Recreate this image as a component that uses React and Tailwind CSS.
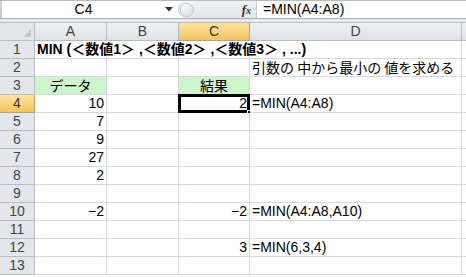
import React from "react";

const font = { fontFamily: '"Liberation Sans", "Noto Sans CJK JP", sans-serif' };
const jp = { fontFamily: '"Noto Sans CJK JP", sans-serif' };

const cols = [
  { key: "A", w: "w-[72px]" },
  { key: "B", w: "w-[72px]" },
  { key: "C", w: "w-[71px]" },
  { key: "D", w: "w-[212px]" },
];

const rows = [
  { n: 2, D: { t: "引数の 中から最小の 値を求める", jp: true } },
  { n: 3, A: { t: "データ", green: true, center: true, jp: true }, C: { t: "結果", green: true, center: true, jp: true } },
  { n: 4, A: { t: "10", right: true }, C: { t: "2", right: true, sel: true }, D: { t: "=MIN(A4:A8)" } },
  { n: 5, A: { t: "7", right: true } },
  { n: 6, A: { t: "9", right: true } },
  { n: 7, A: { t: "27", right: true } },
  { n: 8, A: { t: "2", right: true } },
  { n: 9 },
  { n: 10, A: { t: "−2", right: true }, C: { t: "−2", right: true }, D: { t: "=MIN(A4:A8,A10)" } },
  { n: 11 },
  { n: 12, C: { t: "3", right: true }, D: { t: "=MIN(6,3,4)" } },
  { n: 13 },
];

function RowHead({ n, active }) {
  return (
    <div
      className={`w-[35px] shrink-0 h-full flex items-center justify-center border-r border-b text-[14px] ${
        active
          ? "bg-gradient-to-b from-[#fbe3a4] to-[#f2c55c] border-[#c5a25a] text-[#333]"
          : "bg-[#e3e6eb] border-[#b9bec6] text-[#444]"
      }`}
    >
      {n}
    </div>
  );
}

function Cell({ w, c }) {
  return (
    <div
      className={`${w} shrink-0 h-full relative border-r border-b border-[#d4d9e0] flex items-end pb-[1px] text-[14px] text-black ${
        c && c.green ? "bg-[#ccf5cc]" : "bg-white"
      } ${c && c.right ? "justify-end pr-[2px]" : c && c.center ? "justify-center" : "pl-[2px]"}`}
      style={c && c.jp ? jp : undefined}
    >
      {c && <span className="leading-none pb-[1px] whitespace-nowrap">{c.t}</span>}
      {c && c.sel && (
        <>
          <div className="absolute -left-[1px] -top-[1px] -right-[1px] -bottom-[1px] border-[3px] border-black pointer-events-none" />
          <div className="absolute -right-[3px] -bottom-[3px] w-[5px] h-[5px] bg-black border border-white" />
        </>
      )}
    </div>
  );
}

export default function App() {
  return (
    <div className="w-[466px] h-[277px] overflow-hidden bg-white select-none" style={font}>
      {/* formula bar */}
      <div className="h-[19px] flex border-t border-[#b6bcc6] border-b border-b-[#a9b0ba]">
        <div className="w-[178px] shrink-0 flex items-center border-l-2 border-[#c9ced6] bg-white">
          <div className="flex-1 text-center text-[14px] text-black">C4</div>
          <svg width="8" height="5" viewBox="0 0 8 5" className="mr-[5px]">
            <path d="M0 0 H8 L4 4.5 Z" fill="#333" />
          </svg>
        </div>
        <div className="w-[78px] shrink-0 flex items-center bg-gradient-to-b from-[#f1f3f6] to-[#e3e6ea] rounded-l-full border-l border-[#c8cdd4]">
          <div className="w-[14px] h-[14px] ml-[1px] rounded-full bg-gradient-to-br from-white to-[#d7dbe0] border border-[#c3c8cf]" />
          <div className="flex-1" />
          <span className="mr-[5px] text-[13px] italic font-bold text-[#333]" style={{ fontFamily: '"Liberation Serif", serif' }}>
            f<span className="text-[10px]">x</span>
          </span>
        </div>
        <div className="flex-1 flex items-center pl-[6px] text-[14px] text-black border-l border-[#c8cdd4]">
          =MIN(A4:A8)
        </div>
      </div>
      <div className="h-[4px] bg-[#e6e9ee] border-b border-[#b9bec6]" />
      {/* column headers */}
      <div className="h-[18px] flex">
        <div className="w-[35px] shrink-0 h-full relative bg-[#e3e6eb] border-r border-b border-[#b9bec6]">
          <svg width="8" height="8" viewBox="0 0 8 8" className="absolute right-[3px] bottom-[3px]">
            <path d="M8 0 V8 H0 Z" fill="#c2c7ce" />
          </svg>
        </div>
        {cols.map((c) => (
          <div
            key={c.key}
            className={`${c.w} shrink-0 h-full flex items-center justify-center border-r border-b text-[14px] ${
              c.key === "C"
                ? "bg-gradient-to-b from-[#fbe3a4] to-[#f2c55c] border-[#c5a25a] text-[#333]"
                : "bg-gradient-to-b from-[#eef0f3] to-[#dfe3e8] border-[#b9bec6] text-[#444]"
            }`}
          >
            {c.key}
          </div>
        ))}
        <div className="flex-1 h-full bg-gradient-to-b from-[#eef0f3] to-[#dfe3e8] border-b border-[#b9bec6]" />
      </div>
      {/* row 1 */}
      <div className="h-[18px] flex">
        <RowHead n={1} />
        <div className="w-[427px] shrink-0 h-full flex items-end pl-[2px] border-r border-b border-[#d4d9e0] text-[14px] font-bold text-black">
          <span className="leading-none pb-[2px] whitespace-nowrap">MIN (＜数値1＞ ,＜数値2＞ ,＜数値3＞ , ...)</span>
        </div>
        <div className="flex-1 h-full border-b border-[#d4d9e0]" />
      </div>
      {rows.map((r) => (
        <div key={r.n} className="h-[18px] flex">
          <RowHead n={r.n} active={r.n === 4} />
          {cols.map((c) => (
            <Cell key={c.key} w={c.w} c={r[c.key]} />
          ))}
          <div className="flex-1 h-full border-b border-[#d4d9e0]" />
        </div>
      ))}
    </div>
  );
}
